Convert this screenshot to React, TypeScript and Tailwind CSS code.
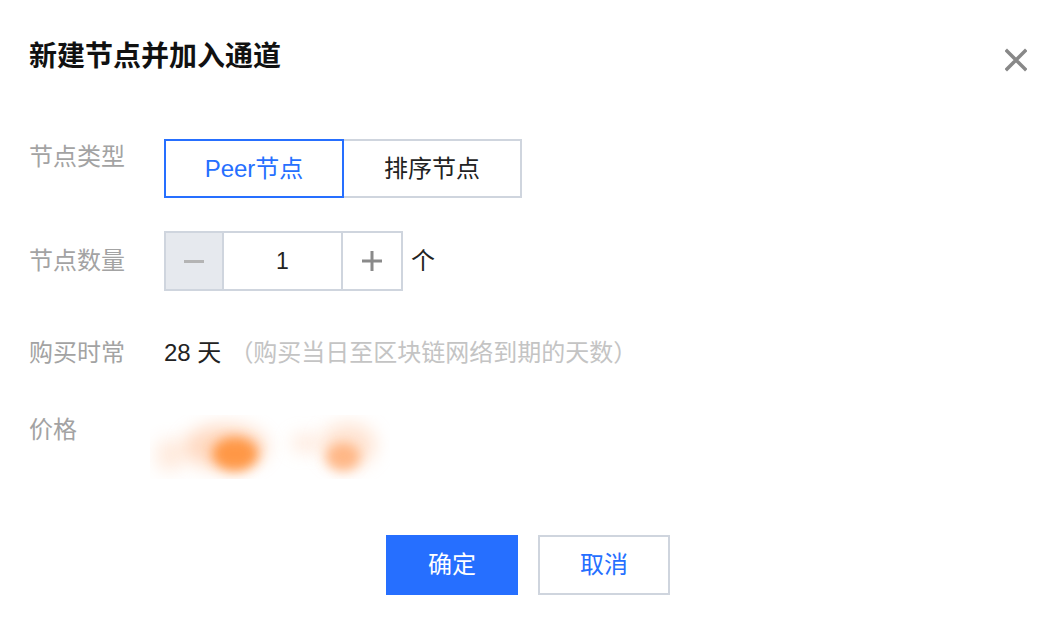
import React from 'react';

const font = { fontFamily: '"Liberation Sans", "Noto Sans CJK SC", sans-serif' };

const PriceBlur = () => (
  <svg width="240" height="64" viewBox="0 0 240 64">
    <defs>
      <filter id="b1" x="-100%" y="-100%" width="300%" height="300%">
        <feGaussianBlur stdDeviation="9" />
      </filter>
      <filter id="b2" x="-100%" y="-100%" width="300%" height="300%">
        <feGaussianBlur stdDeviation="6" />
      </filter>
    </defs>
    <ellipse cx="20" cy="40" rx="14" ry="16" fill="#ffcfae" opacity="0.45" filter="url(#b1)" />
    <ellipse cx="75" cy="32" rx="42" ry="22" fill="#ffb283" opacity="0.5" filter="url(#b1)" />
    <ellipse cx="85" cy="39" rx="23" ry="17" fill="#ff9440" opacity="0.95" filter="url(#b2)" />
    <ellipse cx="155" cy="28" rx="14" ry="9" fill="#ffd6bd" opacity="0.55" filter="url(#b1)" />
    <ellipse cx="198" cy="30" rx="28" ry="22" fill="#ffc8a4" opacity="0.5" filter="url(#b1)" />
    <ellipse cx="193" cy="42" rx="17" ry="14" fill="#ffab72" opacity="0.8" filter="url(#b2)" />
  </svg>
);

export default function App() {
  return (
    <div className="w-full h-[626px] bg-white pl-[29px] pr-[34px] pt-[38px]" style={font}>
      {/* Header */}
      <div className="flex justify-between items-start">
        <h2 className="text-[28px] leading-[37px] font-semibold text-[#111]">新建节点并加入通道</h2>
        <button className="mt-[10px] w-[22px] h-[24px] flex items-center justify-center" aria-label="close">
          <svg width="22" height="24" viewBox="0 0 22 24">
            <path d="M2 3 L20 21 M20 3 L2 21" stroke="#888888" strokeWidth="3.4" strokeLinecap="square" />
          </svg>
        </button>
      </div>

      {/* 节点类型 */}
      <div className="flex items-start mt-[64px]">
        <div className="w-[135px] text-[24px] leading-[36px] text-[#a3a3a3]">节点类型</div>
        <div className="flex">
          <button className="w-[180px] h-[59px] border-2 border-[#266fff] text-[#266fff] text-[24px]">Peer节点</button>
          <button className="w-[178px] h-[59px] border-2 border-l-0 border-[#cfd5de] text-[#222] text-[24px]">排序节点</button>
        </div>
      </div>

      {/* 节点数量 */}
      <div className="flex items-center mt-[33px]">
        <div className="w-[135px] text-[24px] leading-[36px] text-[#a3a3a3]">节点数量</div>
        <div className="flex h-[60px] border-2 border-[#cfd5de]">
          <div className="w-[58px] bg-[#e6e9ee] flex items-center justify-center border-r-2 border-[#cfd5de]">
            <div className="w-[20px] h-[3px] bg-[#b4b4b4]" />
          </div>
          <div className="w-[117px] flex items-center justify-center text-[23px] text-[#222]">1</div>
          <div className="w-[60px] border-l-2 border-[#cfd5de] flex items-center justify-center">
            <svg width="20" height="20" viewBox="0 0 20 20">
              <path d="M0 10 H20 M10 0 V20" stroke="#8a8a8a" strokeWidth="3" />
            </svg>
          </div>
        </div>
        <span className="ml-[8px] text-[24px] text-[#222]">个</span>
      </div>

      {/* 购买时常 */}
      <div className="flex items-center mt-[44px]">
        <div className="w-[135px] text-[24px] leading-[36px] text-[#a3a3a3]">购买时常</div>
        <span className="text-[24px] text-[#222]">28 天</span>
        <span className="ml-[8px] text-[24px] text-[#c4c4c4]">（购买当日至区块链网络到期的天数）</span>
      </div>

      {/* 价格 */}
      <div className="flex items-start mt-[41px]">
        <div className="w-[121px] text-[24px] leading-[36px] text-[#a3a3a3]">价格</div>
        <div className="mt-[3px]">
          <PriceBlur />
        </div>
      </div>

      {/* Footer */}
      <div className="flex justify-center gap-[20px] mt-[56px]">
        <button className="w-[132px] h-[60px] bg-[#266fff] text-white text-[24px]">确定</button>
        <button className="w-[132px] h-[60px] border-2 border-[#cfd5de] bg-white text-[#266fff] text-[24px]">取消</button>
      </div>
    </div>
  );
}
